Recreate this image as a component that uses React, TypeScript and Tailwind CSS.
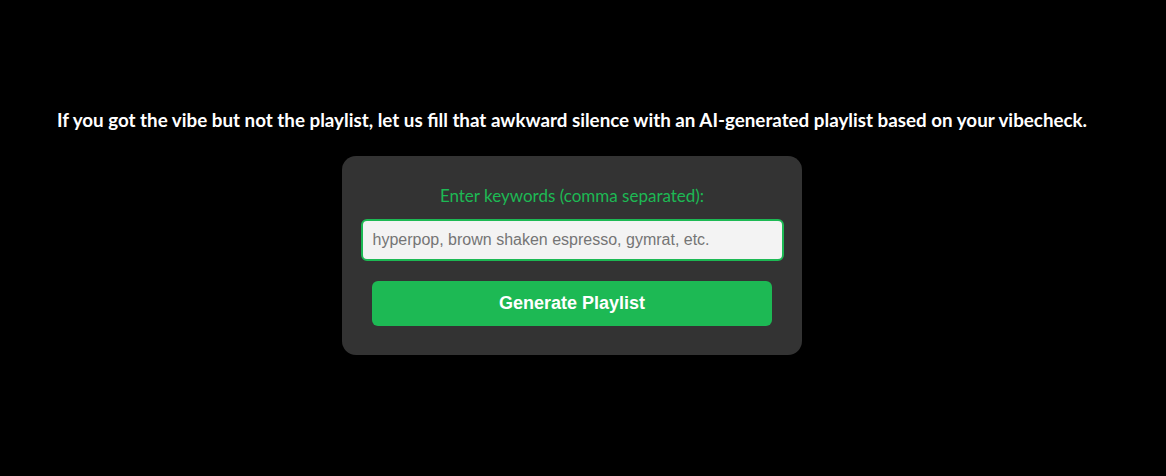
import React from "react";

const App = () => {
  return (
    <div className="min-h-[476px] w-full bg-black">
      <div className="w-[1144px] flex flex-col items-center pt-[107px]">
        <h2 className="text-white font-bold text-[18.8px] leading-[26px] text-center font-['Lato',sans-serif]">
          If you got the vibe but not the playlist, let us fill that awkward silence with an AI-generated playlist based on your vibecheck.
        </h2>
        <div className="mt-[23px] w-[460px] h-[199px] bg-[#333333] rounded-[14px] flex flex-col items-center pt-[29px]">
          <label className="text-[#1db954] text-[17px] leading-[21px] font-['Lato',sans-serif]">
            Enter keywords (comma separated):
          </label>
          <input
            className="mt-[13px] w-[423px] h-[42px] bg-[#f3f3f3] border-2 border-[#1db954] rounded-[6px] px-[10px] text-[16px] font-['Liberation_Sans',sans-serif] placeholder:text-[#757575] outline-none"
            placeholder="hyperpop, brown shaken espresso, gymrat, etc."
          />
          <button className="mt-[20px] w-[400px] h-[45px] bg-[#1db954] rounded-[6px] text-white font-bold text-[18px] font-['Liberation_Sans',sans-serif]">
            Generate Playlist
          </button>
        </div>
      </div>
    </div>
  );
};

export default App;
